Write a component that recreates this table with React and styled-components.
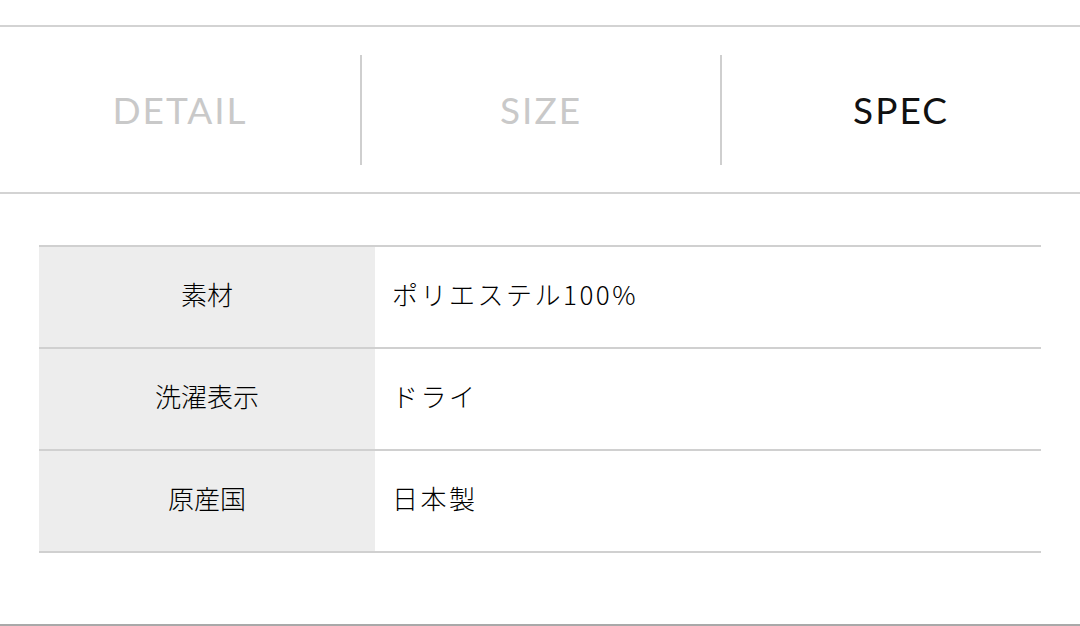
import React from "react";
import styled, { createGlobalStyle } from "styled-components";

const tabs = ["DETAIL", "SIZE", "SPEC"];

const specs = [
  { label: "素材", value: "ポリエステル100%" },
  { label: "洗濯表示", value: "ドライ" },
  { label: "原産国", value: "日本製" },
];

function App() {
  const active = "SPEC";

  return (
    <Page>
      <GlobalStyle />
      <TabBar>
        {tabs.map((tab) => (
          <Tab key={tab} $active={tab === active}>
            {tab}
          </Tab>
        ))}
      </TabBar>
      <SpecTable>
        <tbody>
          {specs.map((row) => (
            <tr key={row.label}>
              <Label>{row.label}</Label>
              <Value>{row.value}</Value>
            </tr>
          ))}
        </tbody>
      </SpecTable>
      <Footer />
    </Page>
  );
}

const GlobalStyle = createGlobalStyle`
  html, body {
    margin: 0;
    padding: 0;
    background: #fff;
  }
  body {
    font-family: "Lato", "Noto Sans CJK JP", sans-serif;
  }
`;

const Page = styled.div`
  /* Page styling */
  width: 1080px;
  height: 626px;
  display: flex;
  flex-direction: column;
  padding-top: 25px;
  box-sizing: border-box;
  background: #fff;
`;

const TabBar = styled.nav`
  /* TabBar styling */
  display: grid;
  grid-template-columns: repeat(3, 1fr);
  align-items: center;
  height: 165px;
  border-top: 2px solid #d3d3d3;
  border-bottom: 2px solid #d3d3d3;
`;

const Tab = styled.div`
  /* Tab styling */
  display: flex;
  align-items: center;
  justify-content: center;
  height: 110px;
  font-family: "Lato", sans-serif;
  font-size: 37px;
  letter-spacing: 2px;
  color: ${(p) => (p.$active ? "#111" : "#c9c9c9")};

  & + & {
    border-left: 2px solid #cfcfcf;
  }
`;

const SpecTable = styled.table`
  /* SpecTable styling */
  margin: 51px 0 0 39px;
  width: 1002px;
  border-collapse: collapse;
  border-top: 2px solid #d0d0d0;
  font-family: "Noto Sans CJK JP", sans-serif;
  font-weight: 300;
  font-size: 26px;
  color: #000;

  tr {
    height: 102px;
    border-bottom: 2px solid #d0d0d0;
  }

  td {
    padding: 0 0 8px;
  }
`;

const Label = styled.td`
  /* Label styling */
  width: 336px;
  text-align: center;
  background: #ededed;
`;

const Value = styled.td`
  /* Value styling */
  && {
    padding-left: 17px;
  }
  letter-spacing: 2.5px;
`;

const Footer = styled.div`
  /* Footer styling */
  margin-top: auto;
  height: 2px;
  background: #a9a9a9;
`;

export default App;
